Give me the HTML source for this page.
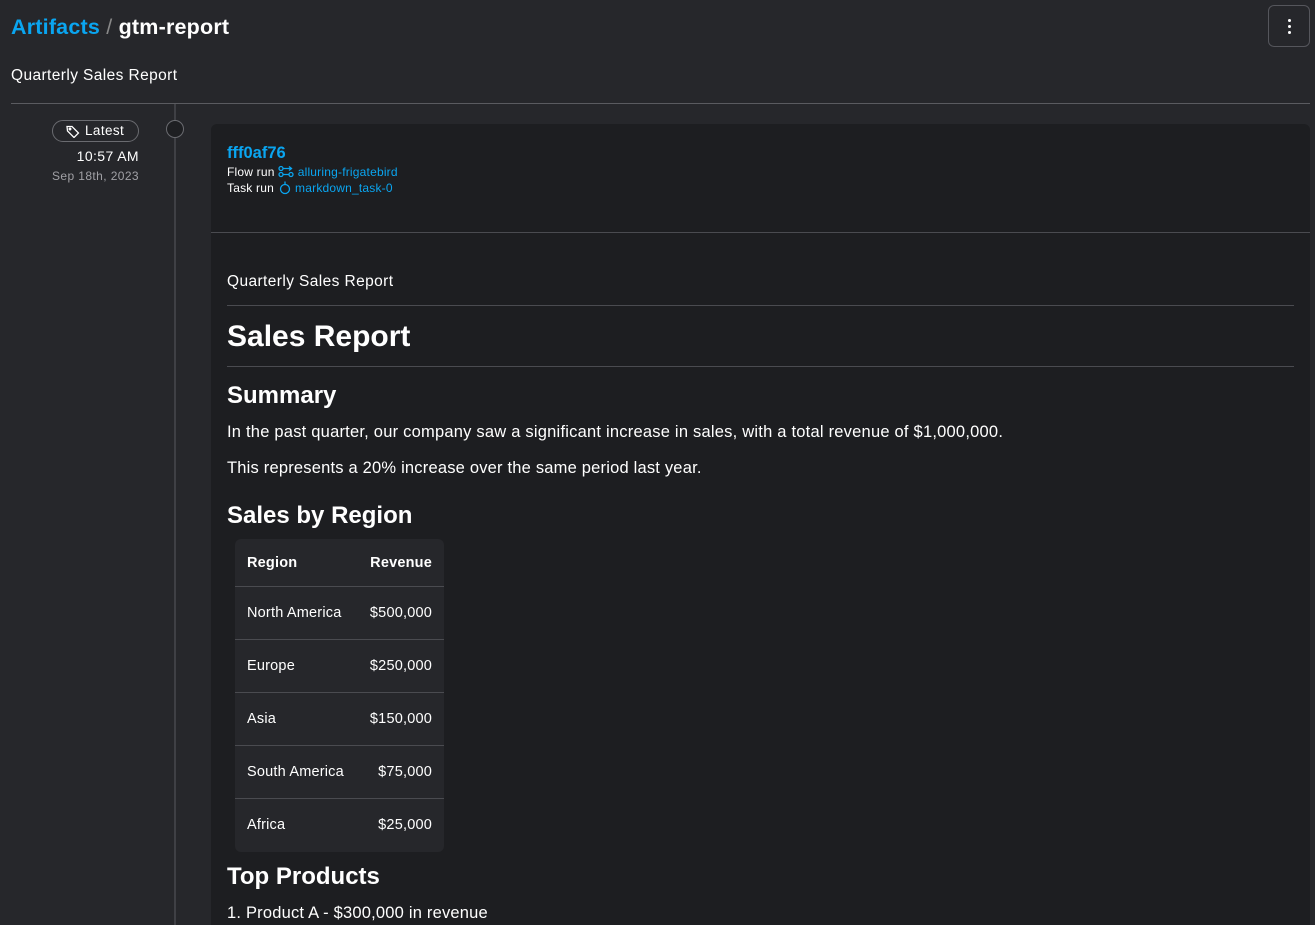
<!DOCTYPE html>
<html><head><meta charset="utf-8"><style>
*{margin:0;padding:0;box-sizing:border-box}
body{width:1315px;height:925px;overflow:hidden;background:#26272b;color:#fff;font-family:"Liberation Sans",sans-serif;position:relative}
.a{position:absolute;white-space:nowrap}
.blue{color:#0aa5f0}
.t{letter-spacing:0.4px}
</style></head><body>
<div class="a" style="left:11px;top:15px;font-size:21.5px;font-weight:bold;letter-spacing:0.2px"><span class="blue">Artifacts</span> <span style="color:#888;font-weight:normal">/</span> gtm-report</div>
<div class="a" style="left:1268px;top:5px;width:42px;height:42px;border:1px solid #55565c;border-radius:6px">
<div style="position:absolute;left:19px;top:13px;width:3px;height:3px;background:#fff;border-radius:50%"></div>
<div style="position:absolute;left:19px;top:19px;width:3px;height:3px;background:#fff;border-radius:50%"></div>
<div style="position:absolute;left:19px;top:25px;width:3px;height:3px;background:#fff;border-radius:50%"></div></div>
<div class="a t" style="left:11px;top:67px;font-size:15.5px">Quarterly Sales Report</div>
<div class="a" style="left:11px;top:103px;width:1299px;height:1px;background:#5a5b60"></div>
<div class="a" style="left:174px;top:104px;width:2px;height:821px;background:#3f4045"></div>
<div class="a" style="left:166px;top:120px;width:18px;height:18px;border-radius:50%;border:1px solid #6a6b70;background:#1e1f22"></div>
<div class="a t" style="left:52px;top:120px;width:87px;height:22px;border:1px solid #6a6b70;border-radius:11px;font-size:13.5px;line-height:20px;padding-left:32px">Latest
<svg style="position:absolute;left:13px;top:4px" width="14" height="13" viewBox="0 0 14 13" fill="none" stroke="#fff" stroke-width="1.3"><path d="M1 1.5h5l6.5 6.5-4.5 4.5L1.5 6z"/><circle cx="4" cy="4" r="0.8"/></svg></div>
<div class="a t" style="left:29px;top:148px;width:110px;text-align:right;font-size:14px">10:57 AM</div>
<div class="a t" style="left:29px;top:169px;width:110px;text-align:right;font-size:12px;color:#a0a0a5">Sep 18th, 2023</div>
<div class="a" style="left:211px;top:124px;width:1099px;height:801px;background:#1d1e21;border-radius:6px 6px 0 0"></div>
<div class="a" style="left:211px;top:232px;width:1099px;height:1px;background:#4a4b50"></div>
<div class="a blue" style="left:227px;top:144px;font-size:16.5px;font-weight:bold">fff0af76</div>
<div class="a" style="left:227px;top:165px;font-size:12px;letter-spacing:0.2px">Flow run <svg width="16" height="13" viewBox="0 0 16 13" fill="none" stroke="#0aa5f0" stroke-width="1.3" style="vertical-align:-2px"><circle cx="3" cy="3.5" r="2"/><circle cx="3" cy="9.5" r="2"/><circle cx="13" cy="9.5" r="2"/><path d="M5 3.5h9M11 1.5l2.5 2-2.5 2M5 9.5h6"/></svg> <span class="blue">alluring-frigatebird</span></div>
<div class="a" style="left:227px;top:181px;font-size:12px;letter-spacing:0.2px">Task run <svg width="14" height="14" viewBox="0 0 14 14" fill="none" stroke="#0aa5f0" stroke-width="1.3" style="vertical-align:-3px"><circle cx="7" cy="8" r="4.5"/><path d="M7 0.5v3"/></svg> <span class="blue">markdown_task-0</span></div>
<div class="a t" style="left:227px;top:273px;font-size:15.5px">Quarterly Sales Report</div>
<div class="a" style="left:227px;top:305px;width:1067px;height:1px;background:#4a4b50"></div>
<div class="a" style="left:227px;top:320px;font-size:30px;font-weight:bold">Sales Report</div>
<div class="a" style="left:227px;top:366px;width:1067px;height:1px;background:#4a4b50"></div>
<div class="a" style="left:227px;top:382px;font-size:24px;font-weight:bold">Summary</div>
<div class="a" style="left:227px;top:423px;font-size:16.5px;letter-spacing:0.22px">In the past quarter, our company saw a significant increase in sales, with a total revenue of $1,000,000.</div>
<div class="a" style="left:227px;top:459px;font-size:16.5px;letter-spacing:0.2px">This represents a 20% increase over the same period last year.</div>
<div class="a" style="left:227px;top:502px;font-size:24px;font-weight:bold">Sales by Region</div>
<div class="a" style="left:235px;top:539px;width:209px;height:313px;background:#26272b;border-radius:6px;font-size:14.5px;letter-spacing:0.2px">
<div style="height:48px;border-bottom:1px solid #4a4b50;position:relative;font-weight:bold"><span class="a" style="left:12px;top:16px">Region</span><span class="a" style="right:12px;top:16px">Revenue</span></div>
<div style="height:53px;border-bottom:1px solid #4a4b50;position:relative"><span class="a" style="left:12px;top:18px">North America</span><span class="a" style="right:12px;top:18px">$500,000</span></div>
<div style="height:53px;border-bottom:1px solid #4a4b50;position:relative"><span class="a" style="left:12px;top:18px">Europe</span><span class="a" style="right:12px;top:18px">$250,000</span></div>
<div style="height:53px;border-bottom:1px solid #4a4b50;position:relative"><span class="a" style="left:12px;top:18px">Asia</span><span class="a" style="right:12px;top:18px">$150,000</span></div>
<div style="height:53px;border-bottom:1px solid #4a4b50;position:relative"><span class="a" style="left:12px;top:18px">South America</span><span class="a" style="right:12px;top:18px">$75,000</span></div>
<div style="height:53px;position:relative"><span class="a" style="left:12px;top:18px">Africa</span><span class="a" style="right:12px;top:18px">$25,000</span></div>
</div>
<div class="a" style="left:227px;top:863px;font-size:24px;font-weight:bold">Top Products</div>
<div class="a" style="left:227px;top:904px;font-size:16.5px;letter-spacing:0.2px">1. Product A - $300,000 in revenue</div>
</body></html>
